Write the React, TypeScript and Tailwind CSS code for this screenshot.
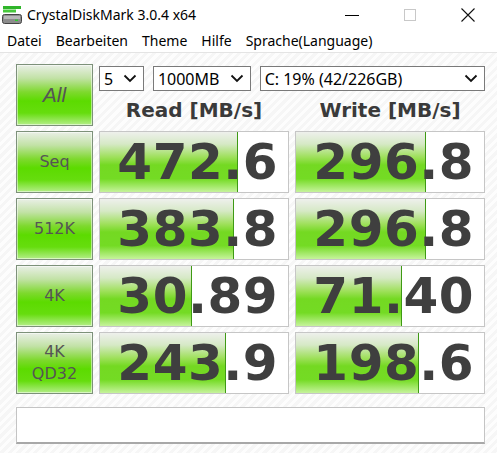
import React from 'react';

interface Result {
  label: string[];
  read: string;
  write: string;
  readFill: number;
  writeFill: number;
}

const results: Result[] = [
  { label: ['Seq'], read: '472.6', write: '296.8', readFill: 138, writeFill: 130 },
  { label: ['512K'], read: '383.8', write: '296.8', readFill: 134, writeFill: 130 },
  { label: ['4K'], read: '30.89', write: '71.40', readFill: 92, writeFill: 106 },
  { label: ['4K', 'QD32'], read: '243.9', write: '198.6', readFill: 126, writeFill: 123 },
];

const greenBtn =
  'border border-[#7d917a] bg-[linear-gradient(to_bottom,#e9efe6_0%,#c2e2a6_22%,#7ed92e_45%,#5cdb00_60%,#66dd0e_80%,#b4ee88_100%)] shadow-[inset_0_0_0_1px_rgba(255,255,255,0.5)]';

const Chevron = () => (
  <svg width="14" height="9" viewBox="0 0 14 9" className="shrink-0">
    <path d="M1.5 1.5 L7 7 L12.5 1.5" fill="none" stroke="#111" strokeWidth="1.8" />
  </svg>
);

const Select = ({ text, w }: { text: string; w: string }) => (
  <div className={`${w} h-[25px] bg-white border border-[#7a7a7a] flex items-center justify-between pl-[4px] pr-[6px] text-[16px] text-black leading-none`}>
    <span>{text}</span>
    <Chevron />
  </div>
);

const ValueBox = ({ value, fill }: { value: string; fill: number }) => (
  <div className="relative h-[62px] bg-white border border-[#c6c6c6] overflow-hidden">
    <div
      className="absolute left-0 top-0 bottom-0 border-r border-[#3e9a14] bg-[linear-gradient(to_bottom,#eef0ec_0%,#d6e9c6_20%,#9ee05a_42%,#74d922_55%,#74db24_78%,#c6f39c_100%)]"
      style={{ width: fill }}
    />
    <div className="relative h-full flex items-center justify-end pr-[10px] font-['DejaVu_Sans',sans-serif] font-bold text-[50px] text-[#3f3f3f] leading-none tracking-[0.5px]">
      {value}
    </div>
  </div>
);

const AppIcon = () => (
  <svg width="20" height="20" viewBox="0 0 20 20">
    <rect x="1" y="1" width="18" height="3" fill="#2fb52a" />
    <rect x="1" y="4.5" width="13" height="3" fill="#48c83c" />
    <rect x="0.5" y="9.5" width="19" height="9" rx="2" fill="#8d8d8d" stroke="#444" />
    <rect x="2" y="11" width="16" height="3" fill="#b8b8b8" />
    <rect x="13" y="14.5" width="3" height="1.5" fill="#2ecc2e" />
  </svg>
);

export default function App() {
  return (
    <div className="w-[497px] h-[453px] overflow-hidden flex flex-col bg-white font-['Noto_Sans','Liberation_Sans',sans-serif]">
      {/* title bar */}
      <div className="h-[30px] flex items-center shrink-0">
        <div className="pl-[2px] pr-[5px] flex items-center">
          <AppIcon />
        </div>
        <span className="text-[14px] text-black leading-none">CrystalDiskMark 3.0.4 x64</span>
        <div className="ml-auto flex items-center h-full">
          <div className="w-[58px] h-full flex items-center justify-center">
            <div className="w-[14px] h-px bg-black" />
          </div>
          <div className="w-[58px] h-full flex items-center justify-center">
            <div className="w-[12px] h-[12px] border border-[#c8c8c8]" />
          </div>
          <div className="w-[58px] h-full flex items-center justify-center">
            <svg width="14" height="14" viewBox="0 0 14 14">
              <path d="M0.5 0.5 L13.5 13.5 M13.5 0.5 L0.5 13.5" stroke="#111" strokeWidth="1.1" />
            </svg>
          </div>
        </div>
      </div>

      {/* menu bar */}
      <div className="h-[22px] flex items-center gap-[14px] pl-[7px] text-[14px] text-black leading-none shrink-0">
        <span>Datei</span>
        <span>Bearbeiten</span>
        <span>Theme</span>
        <span>Hilfe</span>
        <span>Sprache(Language)</span>
      </div>

      {/* client area */}
      <div className="flex-1 border-t border-[#e4e4e4] bg-[repeating-linear-gradient(135deg,#f6f6f6_0px,#f6f6f6_3px,#fdfdfd_3px,#fdfdfd_6px)] pl-[16px] pr-[14px] pt-[11px]">
        <div className="grid grid-cols-[77px_190px_190px] gap-x-[6px] gap-y-[5px]">
          {/* header row */}
          <div className={`${greenBtn} h-[62px] flex items-center justify-center text-[21px] italic text-[#555] font-['Liberation_Sans',sans-serif]`}>
            All
          </div>
          <div className="col-span-2 h-[62px] flex flex-col">
            <div className="flex items-center gap-[9px] mt-[2px]">
              <Select text="5" w="w-[45px]" />
              <Select text="1000MB" w="w-[98px]" />
              <Select text="C: 19% (42/226GB)" w="w-[226px]" />
            </div>
            <div className="flex-1 grid grid-cols-2 gap-x-[6px] items-center font-['DejaVu_Sans',sans-serif] font-bold text-[20px] text-[#3a3a3a] leading-none pt-[3px]">
              <div className="text-center">Read [MB/s]</div>
              <div className="text-center">Write [MB/s]</div>
            </div>
          </div>

          {results.map((r) => (
            <React.Fragment key={r.label.join(' ')}>
              <div className={`${greenBtn} h-[62px] flex flex-col items-center justify-center text-[16px] text-[#555] leading-[22px] font-['DejaVu_Sans',sans-serif]`}>
                {r.label.map((l) => (
                  <span key={l}>{l}</span>
                ))}
              </div>
              <ValueBox value={r.read} fill={r.readFill} />
              <ValueBox value={r.write} fill={r.writeFill} />
            </React.Fragment>
          ))}

          {/* comment box */}
          <div className="col-span-3 mt-[8px] h-[37px] bg-white border border-[#c4c4c4] border-b-2 border-b-[#a8a8a8]" />
        </div>
      </div>
    </div>
  );
}
